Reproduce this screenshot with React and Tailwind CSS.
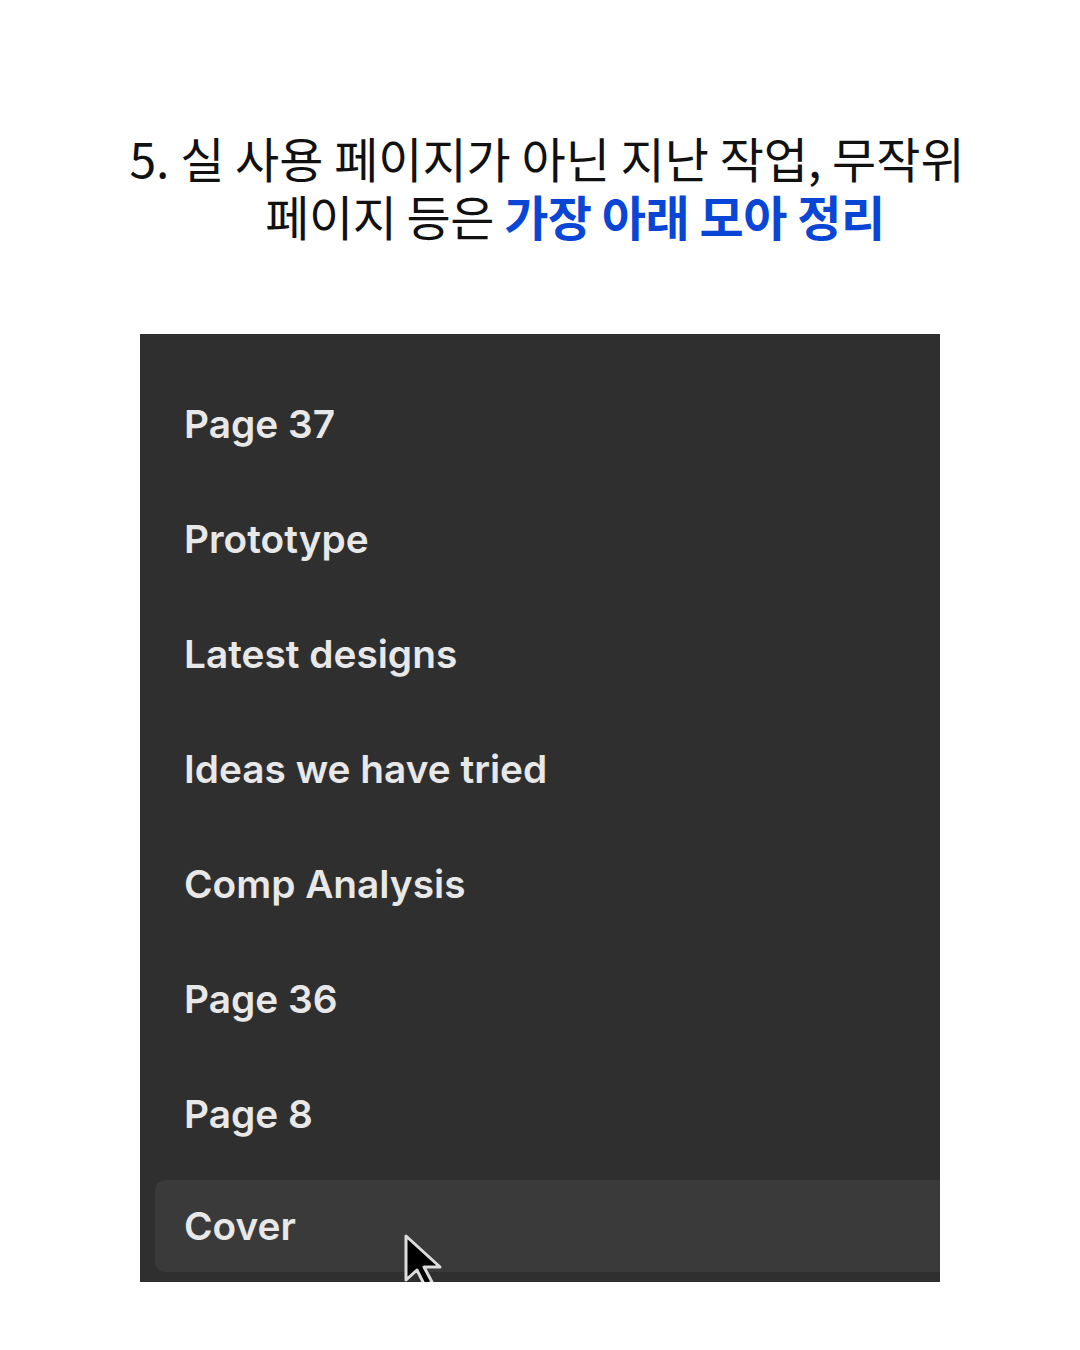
export default function App() {
  const items = ["Page 37", "Prototype", "Latest designs", "Ideas we have tried", "Comp Analysis", "Page 36", "Page 8"];
  return (
    <div className="w-[1080px] h-[1350px] bg-white flex flex-col items-center" style={{ fontFamily: "'Noto Sans CJK KR', sans-serif" }}>
      <div className="mt-[128px] w-full text-center text-[48px] leading-[58px] text-[#111]">
        <div className="pl-[14px] tracking-[0px]">5. 실 사용 페이지가 아닌 지난 작업, 무작위</div>
        <div className="pl-[70px] tracking-[-0.5px]">페이지 등은 <span className="font-bold text-[#0a46d6]">가장 아래 모아 정리</span></div>
      </div>
      <div className="mt-[90px] w-[800px] h-[948px] bg-[#2f2f2f] flex flex-col pt-[33px] overflow-hidden" style={{ fontFamily: "Inter, sans-serif" }}>
        {items.map((t) => (
          <div key={t} className="h-[115px] flex items-center pl-[44px] text-[38.8px] font-semibold text-[#e8e8e8] tracking-[0px]">{t}</div>
        ))}
        <div className="relative ml-[15px] mt-[8px] h-[92px] rounded-l-[10px] bg-[#3a3a3a] flex items-center pl-[29px] text-[38.8px] font-semibold text-[#e8e8e8] tracking-[0px]">
          Cover
          <svg className="absolute left-[248px] top-[54px]" width="42" height="52" viewBox="0 0 42 52">
            <path d="M3 2 L3 46 L14 36 L22 52 L29 48 L21 33 L37 33 Z" fill="#000" stroke="#ddd" strokeWidth="3" strokeLinejoin="round" />
          </svg>
        </div>
      </div>
    </div>
  );
}
